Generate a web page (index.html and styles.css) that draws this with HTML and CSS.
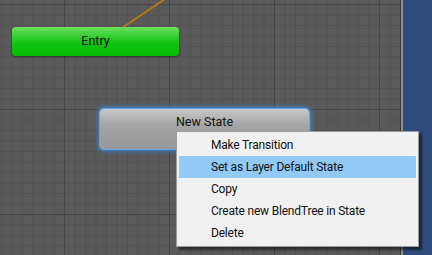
FILE: index.html
```html
<!doctype html>
<html lang="en">
<head>
	<meta charset="utf-8">
	<title>Animator</title>
	<link rel="stylesheet" href="styles.css">
</head>
<body>
	<div class="window">
		<div class="graph">
			<!-- transition arrow coming from off screen -->
			<svg class="link" width="432" height="255">
				<line x1="122" y1="28" x2="165" y2="-1" stroke="#b47a12" stroke-width="2"/>
			</svg>

			<div class="node entry">Entry</div>
			<div class="node state selected">New State</div>

			<ul class="menu">
				<li>Make Transition</li>
				<li class="active">Set as Layer Default State</li>
				<li>Copy</li>
				<li>Create new BlendTree in State</li>
				<li>Delete</li>
			</ul>
		</div>
		<div class="divider"></div>
		<div class="inspector"></div>
	</div>
</body>
</html>
```

FILE: styles.css
```css
body {
  margin: 0;
  font-family: Roboto, "Noto Sans", sans-serif;
}

.window {
  display: flex;
  width: 432px;
  height: 255px;
  overflow: hidden;
}

/* The graph - grid canvas */
.graph {
  position: relative;
  flex: 0 0 400px;
  background-color: #5a5a5a;
  background-image:
    linear-gradient(to right, #454545 1px, transparent 1px),
    linear-gradient(to bottom, #454545 1px, transparent 1px),
    linear-gradient(to right, #525252 1px, transparent 1px),
    linear-gradient(to bottom, #525252 1px, transparent 1px);
  background-size: 105px 105px, 105px 105px, 10.5px 10.5px, 10.5px 10.5px;
  background-position: 64px 4px, 64px 4px, 1px 4px, 1px 4px;
}

.divider {
  flex: 0 0 3px;
  background: #8d8d8d;
  border-left: 1px solid #3a3a3a;
  box-sizing: border-box;
}

.inspector {
  flex: 1;
  background: #2e4b79;
}

.link {
  position: absolute;
  left: 0;
  top: 0;
}

/* State nodes */
.node {
  position: absolute;
  box-sizing: border-box;
  border-radius: 4px;
  font-size: 12.5px;
  color: #111;
  text-align: center;
  box-shadow: 0 1px 2px rgba(0, 0, 0, 0.45);
}

.entry {
  left: 12px;
  top: 27px;
  width: 167px;
  height: 29px;
  line-height: 28px;
  background: linear-gradient(#6ae05e, #12c212 55%, #05bc05);
}

.state {
  left: 100px;
  top: 109px;
  width: 209px;
  height: 40px;
  padding-top: 5px;
  line-height: 16px;
  background: linear-gradient(#c9c9c9, #a4a4a4 40%, #999);
}

.state.selected {
  box-shadow: 0 0 0 1px #5aa6f0, 0 0 4px 2px #3a88dc;
}

/* Context menu */
.menu {
  position: absolute;
  left: 176px;
  top: 131px;
  width: 243px;
  margin: 0;
  padding: 2px;
  list-style: none;
  box-sizing: border-box;
  background: #f1f1f1;
  border: 1px solid #9c9c9c;
  box-shadow: 3px 3px 2px rgba(0, 0, 0, 0.5);
  z-index: 2;
}

.menu li {
  height: 22px;
  line-height: 22px;
  padding-left: 32px;
  font-size: 12px;
  letter-spacing: -0.2px;
  color: #111;
  white-space: nowrap;
}

.menu li.active {
  background: #91c9f7;
}
```
